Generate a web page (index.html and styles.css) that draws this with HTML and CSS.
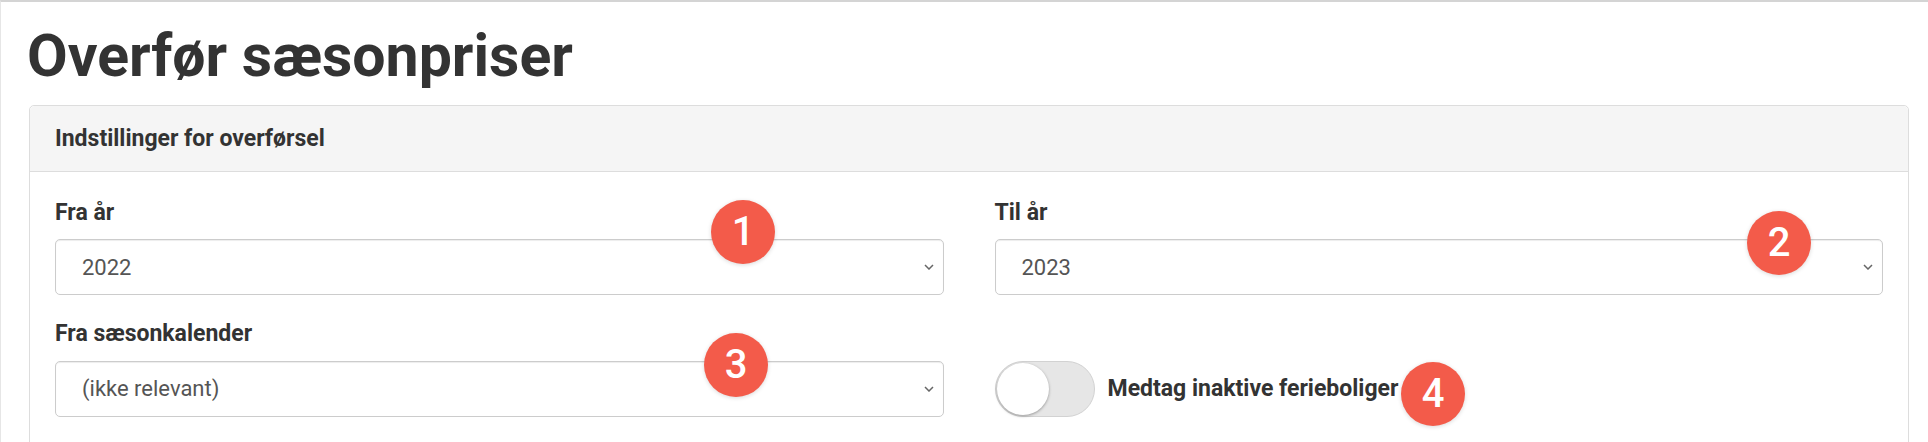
FILE: index.html
```html
<!DOCTYPE html>
<html lang="da">
<head>
    <meta charset="UTF-8">
    <meta name="viewport" content="width=device-width, initial-scale=1.0">
    <title>Overfør sæsonpriser</title>
    <link rel="stylesheet" href="styles.css">
</head>
<body>
    <div class="page">
        <h1 class="page-title">Overfør sæsonpriser</h1>

        <div class="panel">
            <div class="panel-heading">Indstillinger for overførsel</div>
            <div class="panel-body">
                <div class="form-grid">
                    <div class="form-group">
                        <label class="field-label" for="fromYear">Fra år</label>
                        <div class="select-wrap">
                            <select id="fromYear">
                                <option>2022</option>
                                <option>2023</option>
                            </select>
                            <svg class="chevron" width="10" height="6" viewBox="0 0 10 6"><path d="M1 1l4 4 4-4" /></svg>
                        </div>
                    </div>
                    <div class="form-group">
                        <label class="field-label" for="toYear">Til år</label>
                        <div class="select-wrap">
                            <select id="toYear">
                                <option>2023</option>
                                <option>2024</option>
                            </select>
                            <svg class="chevron" width="10" height="6" viewBox="0 0 10 6"><path d="M1 1l4 4 4-4" /></svg>
                        </div>
                    </div>
                    <div class="form-group">
                        <label class="field-label" for="calendar">Fra sæsonkalender</label>
                        <div class="select-wrap">
                            <select id="calendar">
                                <option>(ikke relevant)</option>
                            </select>
                            <svg class="chevron" width="10" height="6" viewBox="0 0 10 6"><path d="M1 1l4 4 4-4" /></svg>
                        </div>
                    </div>
                    <div class="form-group">
                        <label class="switch">
                            <input type="checkbox">
                            <span class="track"><span class="knob"></span></span>
                            <span class="switch-text">Medtag inaktive ferieboliger</span>
                        </label>
                    </div>
                </div>
            </div>
        </div>

        <!-- markeringer -->
        <span class="badge badge-1">1</span>
        <span class="badge badge-2">2</span>
        <span class="badge badge-3">3</span>
        <span class="badge badge-4">4</span>
    </div>
</body>
</html>
```

FILE: styles.css
```css
html, body {
    overflow: hidden;
}
body {
    margin: 0;
    font-family: Roboto, "Liberation Sans", sans-serif;
    color: #333;
    background: white;
}
.page {
    position: relative;
    border-top: 2px solid #d4d4d4;
    border-left: 1px solid #e6e6e6;
    padding: 0 19px 0 28px;
}
.page-title {
    font-size: 59px;
    font-weight: 700;
    line-height: 72px;
    margin: 18px 0 13px -2px;
    color: #333;
}
.panel {
    border: 1px solid #ddd;
    border-radius: 5px;
    background: white;
}
.panel-heading {
    background: #f5f5f5;
    border-bottom: 1px solid #ddd;
    border-radius: 5px 5px 0 0;
    padding: 19px 25px 18px;
    font-size: 23px;
    font-weight: 700;
    line-height: 1.2;
}
.panel-body {
    padding: 27px 25px 40px;
}
.form-grid {
    display: grid;
    grid-template-columns: 1fr 1fr;
    column-gap: 51px;
    row-gap: 25px;
    align-items: end;
}
.field-label {
    display: block;
    font-size: 23px;
    font-weight: 700;
    line-height: 1.2;
    margin-bottom: 13px;
}
.select-wrap {
    display: grid;
}
.select-wrap select,
.select-wrap .chevron {
    grid-area: 1 / 1;
}
.select-wrap select {
    appearance: none;
    -webkit-appearance: none;
    height: 56px;
    width: 100%;
    padding: 0 40px 0 26px;
    font-family: Roboto, "Liberation Sans", sans-serif;
    font-size: 22px;
    color: #555;
    background: white;
    border: 1px solid #ccc;
    border-radius: 5px;
    box-shadow: inset 0 1px 1px rgba(0,0,0,0.075);
}
.chevron {
    justify-self: end;
    align-self: center;
    margin-right: 10px;
    pointer-events: none;
}
.chevron path {
    fill: none;
    stroke: #666;
    stroke-width: 1.5;
}
.switch {
    display: flex;
    align-items: center;
    gap: 13px;
    cursor: pointer;
}
.switch input { display: none; }
.track {
    display: flex;
    align-items: center;
    box-sizing: border-box;
    width: 100px;
    height: 56px;
    padding: 1px;
    border-radius: 28px;
    background: #e6e6e6;
    border: 1px solid #d2d2d2;
}
.knob {
    width: 52px;
    height: 52px;
    border-radius: 50%;
    background: white;
    box-shadow: 0 1px 3px rgba(0,0,0,0.35);
}
.switch input:checked + .track { background: #4CAF50; justify-content: flex-end; }
.switch-text {
    font-size: 23px;
    font-weight: 700;
    line-height: 1.2;
}
.badge {
    position: absolute;
    width: 64px;
    height: 64px;
    border-radius: 50%;
    background: #f35b4a;
    color: white;
    font-family: Roboto, "Liberation Sans", sans-serif;
    font-weight: 500;
    font-size: 40px;
    line-height: 64px;
    text-align: center;
    box-shadow: 0 1px 4px rgba(0,0,0,0.15);
}
.badge-1 { left: 710px; top: 198px; }
.badge-2 { left: 1746px; top: 209px; }
.badge-3 { left: 703px; top: 331px; }
.badge-4 { left: 1400px; top: 360px; }
```
